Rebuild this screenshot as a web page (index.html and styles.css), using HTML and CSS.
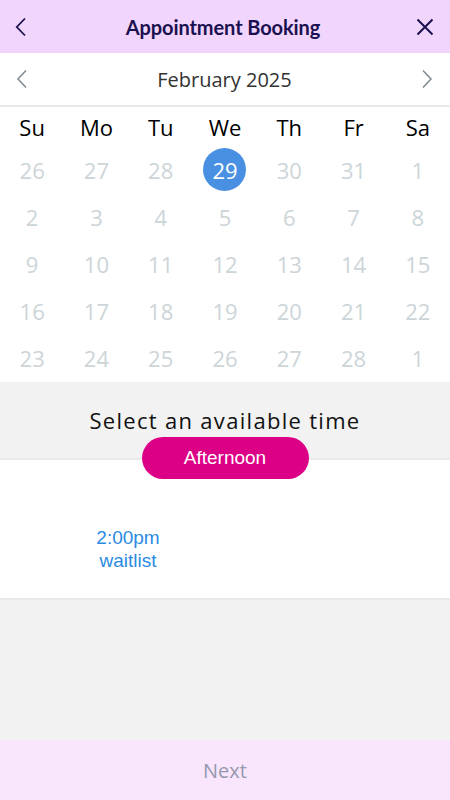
FILE: index.html
```html
<!doctype html>
<html>
<head>
<meta charset="utf-8">
<title>Appointment Booking</title>
<link rel="stylesheet" href="styles.css">
</head>
<body>
<div class="app">
  <div class="topbar">
    <span class="icon-btn">
      <svg width="12" height="20" viewBox="0 0 12 20"><path d="M10 1.5 L1.8 10 L10 18.5" fill="none" stroke="#1b1150" stroke-width="1.8"/></svg>
    </span>
    <span class="title">Appointment Booking</span>
    <span class="icon-btn">
      <svg width="18" height="18" viewBox="0 0 18 18"><path d="M1.5 1.5 L16.5 16.5 M16.5 1.5 L1.5 16.5" fill="none" stroke="#1b1150" stroke-width="2"/></svg>
    </span>
  </div>

  <div class="month-bar">
    <span class="nav">
      <svg width="12" height="20" viewBox="0 0 12 20"><path d="M10 1.5 L2 10 L10 18.5" fill="none" stroke="#7d8a93" stroke-width="1.5"/></svg>
    </span>
    <span class="month">February 2025</span>
    <span class="nav">
      <svg width="12" height="20" viewBox="0 0 12 20"><path d="M2 1.5 L10 10 L2 18.5" fill="none" stroke="#7d8a93" stroke-width="1.5"/></svg>
    </span>
  </div>

  <div class="calendar">
    <div class="week head">
      <span>Su</span><span>Mo</span><span>Tu</span><span>We</span><span>Th</span><span>Fr</span><span>Sa</span>
    </div>
    <div class="week">
      <span>26</span><span>27</span><span>28</span><span><b class="picked">29</b></span><span>30</span><span>31</span><span>1</span>
    </div>
    <div class="week">
      <span>2</span><span>3</span><span>4</span><span>5</span><span>6</span><span>7</span><span>8</span>
    </div>
    <div class="week">
      <span>9</span><span>10</span><span>11</span><span>12</span><span>13</span><span>14</span><span>15</span>
    </div>
    <div class="week">
      <span>16</span><span>17</span><span>18</span><span>19</span><span>20</span><span>21</span><span>22</span>
    </div>
    <div class="week">
      <span>23</span><span>24</span><span>25</span><span>26</span><span>27</span><span>28</span><span>1</span>
    </div>
  </div>

  <div class="time-head">
    <div class="time-title">Select an available time</div>
    <div class="pill">Afternoon</div>
  </div>

  <div class="slots">
    <a class="slot">2:00pm<br>waitlist</a>
  </div>

  <div class="filler"></div>

  <div class="footer">Next</div>
</div>
</body>
</html>
```

FILE: styles.css
```css
body {
    margin: 0;
    font-family: "Open Sans", "DejaVu Sans", sans-serif;
}
.app {
    width: 450px;
    height: 800px;
    display: flex;
    flex-direction: column;
    overflow: hidden;
}
.topbar {
    height: 53px;
    background-color: #f1d5fc;
    display: flex;
    align-items: center;
    justify-content: space-between;
    padding: 0 16px 0 12px;
}
.icon-btn {
    display: flex;
    width: 18px;
    justify-content: center;
}
.title {
    font-family: Lato, "Liberation Sans", sans-serif;
    font-weight: bold;
    font-size: 20px;
    color: #1b1150;
    letter-spacing: -0.1px;
}
.month-bar {
    height: 52px;
    background-color: #fff;
    border-bottom: 2px solid #e6eaec;
    display: flex;
    align-items: center;
    justify-content: space-between;
    padding: 0 17px 0 16px;
}
.nav { display: flex; }
.month {
    font-size: 20px;
    color: #333;
}
.calendar {
    background-color: #fff;
    padding-bottom: 1px;
}
.week {
    display: grid;
    grid-template-columns: repeat(7, 1fr);
    height: 47px;
    align-items: center;
}
.week span {
    text-align: center;
    font-size: 22px;
    color: #ccd5d8;
}
.week.head {
    height: 38px;
    padding-top: 1px;
}
.week.head span {
    color: #000;
}
.picked {
    display: inline-flex;
    width: 43px;
    height: 43px;
    border-radius: 50%;
    background-color: #4a90e2;
    color: #fff;
    font-weight: normal;
    align-items: center;
    justify-content: center;
}
.time-head {
    background-color: #f2f2f2;
    border-bottom: 2px solid #e8ebee;
    padding-top: 23px;
    display: flex;
    flex-direction: column;
    align-items: center;
}
.time-title {
    font-size: 22px;
    line-height: 30px;
    letter-spacing: 1.3px;
    color: #111;
}
.pill {
    position: relative;
    z-index: 1;
    width: 167px;
    height: 42px;
    margin-top: 2px;
    margin-bottom: -21px;
    border-radius: 21px;
    background-color: #dc0087;
    color: #fff;
    font-family: "Liberation Sans", Arial, sans-serif;
    font-size: 19px;
    display: flex;
    align-items: center;
    justify-content: center;
}
.slots {
    background-color: #fff;
    height: 140px;
    border-bottom: 2px solid #e8ebee;
    padding: 66px 0 0 78px;
    box-sizing: border-box;
}
.slot {
    display: block;
    width: 100px;
    text-align: center;
    font-family: "Liberation Sans", Arial, sans-serif;
    font-size: 19px;
    line-height: 23px;
    color: #2b8ae2;
}
.filler {
    flex: 1;
    background-color: #f2f2f2;
}
.footer {
    height: 60px;
    background-color: #f9e6fd;
    display: flex;
    align-items: center;
    justify-content: center;
    font-size: 20px;
    color: #9698ad;
}
```
